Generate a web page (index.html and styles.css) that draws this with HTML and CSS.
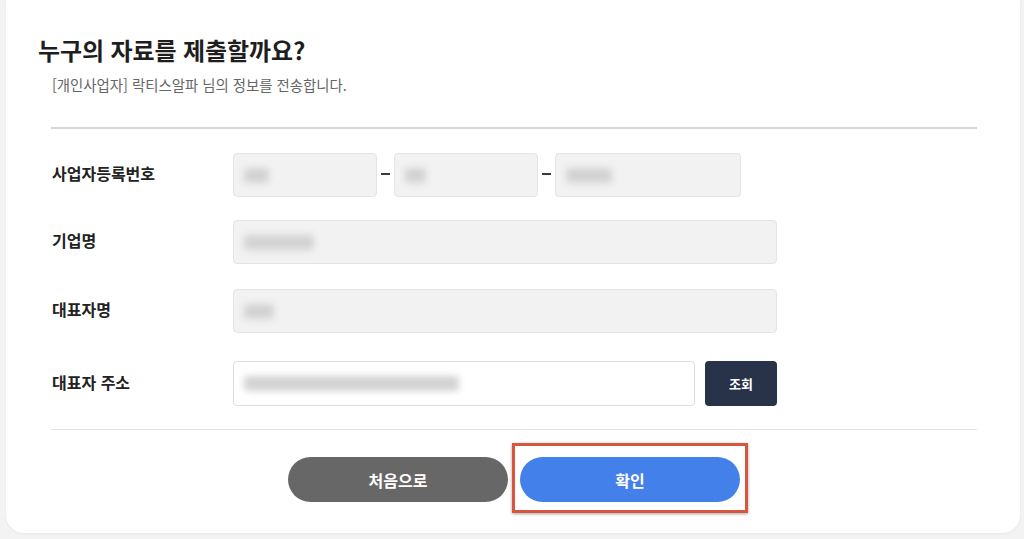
FILE: index.html
```html
<!DOCTYPE html>
<html lang="ko">
<head>
<meta charset="utf-8">
<link rel="stylesheet" href="styles.css">
</head>
<body>
<div class="card">
  <h1 class="title">누구의 자료를 제출할까요?</h1>
  <p class="subtitle">[개인사업자] 락티스알파 님의 정보를 전송합니다.</p>
  <div class="form">
    <div class="row">
      <div class="label">사업자등록번호</div>
      <div class="fields">
        <div class="input filled w-short"><span class="blur" style="width:25px"></span></div>
        <span class="dash"></span>
        <div class="input filled w-short"><span class="blur" style="width:21px"></span></div>
        <span class="dash"></span>
        <div class="input filled w-mid"><span class="blur" style="width:46px"></span></div>
      </div>
    </div>
    <div class="row">
      <div class="label">기업명</div>
      <div class="fields">
        <div class="input filled w-full"><span class="blur" style="width:70px"></span></div>
      </div>
    </div>
    <div class="row row-3">
      <div class="label">대표자명</div>
      <div class="fields">
        <div class="input filled w-full"><span class="blur" style="width:30px"></span></div>
      </div>
    </div>
    <div class="row row-4">
      <div class="label">대표자 주소</div>
      <div class="fields">
        <div class="input plain w-addr"><span class="blur" style="width:215px"></span></div>
        <button class="search">조회</button>
      </div>
    </div>
  </div>
  <div class="actions">
    <button class="btn btn-gray">처음으로</button>
    <button class="btn btn-blue">확인</button>
  </div>
</div>
</body>
</html>
```

FILE: styles.css
```css
* { box-sizing: border-box; }
html, body { margin: 0; padding: 0; }
body {
  background: #f3f3f3;
  font-family: "Noto Sans CJK KR", "Noto Sans", sans-serif;
  color: #222;
  height: 539px;
  overflow: hidden;
  padding: 0 4px 0 6px;
}
.card {
  background: #fff;
  margin-top: -14px;
  height: 547px;
  border-radius: 18px;
  padding: 48px 43px 0 32px;
  box-shadow: 0 1px 3px rgba(0,0,0,0.05);
}
.title {
  margin: 0;
  font-size: 24px;
  line-height: 32px;
  font-weight: 700;
  color: #1e1e1e;
  letter-spacing: -0.1px;
}
.subtitle {
  margin: 8px 0 0 14px;
  font-size: 14.4px;
  line-height: 22px;
  color: #666;
}
.form {
  margin: 31px 0 0 13px;
  border-top: 2px solid #d6d6d6;
  border-bottom: 1px solid #e3e3e3;
  padding: 24px 0 23px;
  display: flex;
  flex-direction: column;
  gap: 23px;
}
.row {
  display: grid;
  grid-template-columns: 182px 1fr;
  align-items: center;
  height: 44px;
}
.row-3 { margin-top: 2px; }
.row-4 { margin-top: 5px; height: 45px; }
.label {
  font-size: 16px;
  font-weight: 700;
  color: #222;
  padding-left: 1px;
  margin-top: -4px;
}
.fields {
  display: flex;
  align-items: center;
  height: 100%;
}
.input {
  height: 100%;
  border-radius: 4px;
  border: 1px solid #e4e4e4;
  display: flex;
  align-items: center;
  padding-left: 10px;
}
.filled { background: #f2f2f2; }
.plain { background: #fff; border-color: #dedede; }
.w-short { width: 144px; }
.w-mid { width: 186px; padding-left: 10px; }
.w-full { width: 544px; }
.w-addr { width: 462px; }
.dash {
  width: 17px;
  display: flex;
  justify-content: center;
  margin-top: -2px;
}
.dash::before {
  content: "";
  width: 9px;
  height: 2px;
  background: #3a3a3a;
}
.blur {
  display: block;
  height: 15px;
  background: #d2d2d2;
  border-radius: 4px;
  filter: blur(3.5px);
}
.search {
  margin-left: 10px;
  width: 72px;
  height: 45px;
  border: none;
  border-radius: 4px;
  background: #283249;
  color: #fff;
  font-family: inherit;
  font-size: 13px;
  font-weight: 700;
}
.actions {
  display: flex;
  justify-content: center;
  gap: 12px;
  margin: 27px 0 0 13px;
}
.btn {
  width: 220px;
  height: 45px;
  border: none;
  border-radius: 23px;
  color: #fff;
  font-family: inherit;
  font-size: 16px;
  font-weight: 700;
}
.btn-gray { background: #676767; }
.btn-blue { background: #4480e9; position: relative; }
.btn-blue::after {
  content: "";
  position: absolute;
  top: -14px;
  left: -8px;
  right: -8px;
  bottom: -11px;
  border: 3px solid #d9563e;
  box-shadow: 0 1px 3px rgba(0,0,0,0.35);
}
```
